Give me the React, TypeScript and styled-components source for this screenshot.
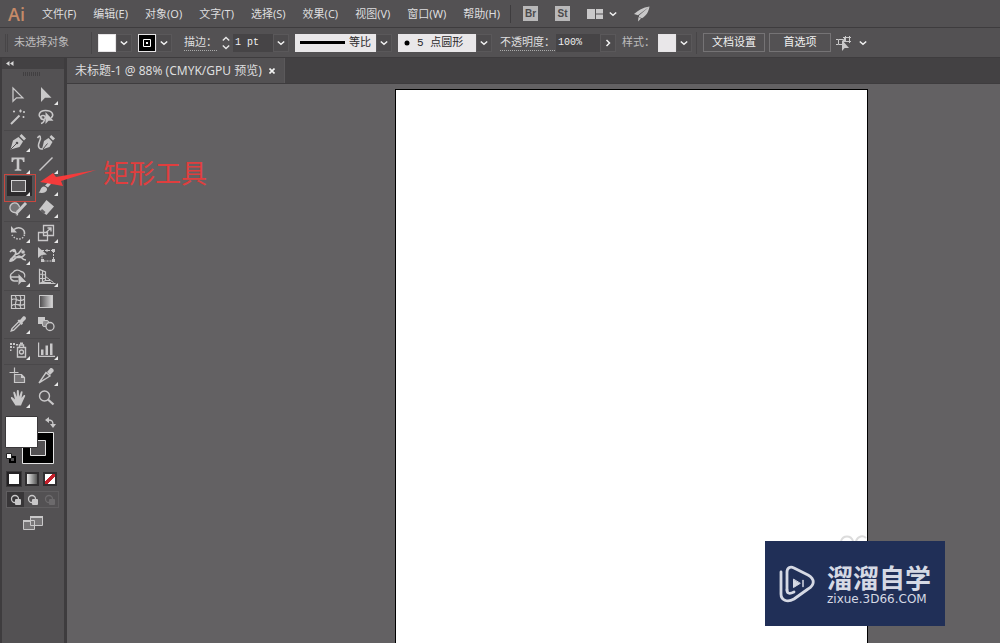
import React from "react";
import styled, { createGlobalStyle, css } from "styled-components";

const color = {
  panel: "#535153",
  panelDark: "#434143",
  line: "#3e3c3e",
  canvas: "#636163",
  text: "#dededf",
  muted: "#bdbcbd",
  icon: "#c9c8c9",
  field: "#464446",
  light: "#e9e7e9",
  red: "#e03e3e",
  brand: "#202f57",
};

const GlobalStyle = createGlobalStyle`
  *, *::before, *::after { box-sizing: border-box; }
  body { margin: 0; background: ${color.canvas}; color: ${color.text};
    font-family: "Noto Sans", "Noto Sans CJK SC", sans-serif; font-size: 12px; line-height: 16px; }
  button, input, select { font: inherit; color: inherit; border: 0; padding: 0; margin: 0; background: none; border-radius: 0; }
  svg { display: block; flex: none; }
`;

const Shell = styled.div`
  position: relative;
  display: flex;
  flex-direction: column;
  min-height: 100vh;
`;

/* ---------- top menu ---------- */

const MenuBar = styled.header`
  display: flex;
  align-items: center;
  height: 28px;
  padding-left: 8px;
  background: ${color.panel};
  border-bottom: 1px solid ${color.line};
`;

const Brand = styled.span`
  width: 34px;
  font: 600 18px/20px "Open Sans", sans-serif;
  color: #c58a68;
`;

const MenuList = styled.nav`
  display: flex;
  gap: 17px;
  font-size: 11px;
`;

const MenuButton = styled.button`
  white-space: nowrap;
`;

const MenuDivider = styled.span`
  width: 1px;
  height: 18px;
  margin: 0 12px 0 10px;
  background: ${color.line};
`;

const QuickActions = styled.div`
  display: flex;
  align-items: center;
  gap: 17px;
`;

const AppBadge = styled.button`
  width: 15px;
  height: 15px;
  background: #b9b8b9;
  color: #4b494b;
  font: bold 10px/15px "Liberation Sans", sans-serif;
  text-align: center;
`;

const IconButton = styled.button`
  display: flex;
  align-items: center;
  gap: 6px;
`;

/* ---------- control bar ---------- */

const ControlBar = styled.div`
  display: flex;
  align-items: center;
  height: 30px;
  padding-left: 5px;
  font: 11px/16px "Liberation Mono", "Noto Sans CJK SC", monospace;
  background: ${color.panel};
  border-bottom: 1px solid ${color.line};
`;

const Grip = styled.span`
  width: 3px;
  height: 18px;
  margin-right: 6px;
  border: 1px solid #474547;
  border-width: 0 1px;
`;

const Status = styled.span`
  width: 73px;
  color: ${color.muted};
`;

const ControlDivider = styled.span`
  width: 1px;
  height: 22px;
  margin: 0 6px 0 4px;
  background: #474547;
`;

const Dropdown = styled.div<{ $gap?: number }>`
  display: flex;
  height: 18px;
  margin-right: ${(p) => p.$gap ?? 6}px;
`;

const Swatch = styled.button<{ $fill: string }>`
  display: grid;
  place-items: center;
  width: 18px;
  height: 18px;
  background: ${(p) => p.$fill};
  border: 1px solid #e6e4e6;
`;

const ArrowButton = styled.button`
  display: grid;
  place-items: center;
  width: 16px;
  height: 18px;
  background: #4d4b4d;
  border: 1px solid #5a585a;
`;

const FieldLabel = styled.label<{ $width: number; $linked?: boolean }>`
  width: ${(p) => p.$width}px;
  white-space: nowrap;
  color: ${(p) => (p.$linked ? color.text : color.muted)};
  span {
    ${(p) =>
      p.$linked &&
      css`
        display: inline-block;
        height: 16px;
        border-bottom: 1px dotted #aaa;
      `}
  }
`;

const Spinner = styled.button`
  width: 14px;
  height: 18px;
  display: grid;
  place-items: center;
`;

const NumberField = styled.input<{ $width: number }>`
  width: ${(p) => p.$width}px;
  height: 18px;
  padding-left: 2px;
  background: ${color.field};
  color: #f0f0f0;
  font-size: 10px;
`;

const LightField = styled.div<{ $width: number }>`
  display: flex;
  align-items: center;
  justify-content: space-between;
  width: ${(p) => p.$width}px;
  padding: 0 5px;
  background: ${color.light};
  color: #2c2a2c;
`;

const PlainSelect = styled.select`
  appearance: none;
  cursor: pointer;
`;

const OutlineButton = styled.button`
  width: 62px;
  height: 19px;
  margin-right: 4px;
  border: 1px solid #757375;
  color: #f0f0f0;
`;

/* ---------- workspace ---------- */

const Workspace = styled.div`
  display: flex;
  flex: 1;
`;

const Toolbox = styled.aside`
  position: relative;
  flex: none;
  width: 67px;
  background: ${color.panel};
  border-left: 2px solid ${color.line};
  border-right: 3px solid ${color.line};
`;

const ToolboxHead = styled.button`
  display: flex;
  align-items: center;
  width: 100%;
  height: 11px;
  padding-left: 4px;
  background: ${color.panelDark};
`;

const ToolboxGrip = styled.div`
  width: 18px;
  height: 4px;
  margin: 3px auto 8px 21px;
  background: repeating-linear-gradient(90deg, #413f41 0 1px, ${color.panel} 1px 2px);
`;

const ToolGroup = styled.div<{ $space: number }>`
  display: grid;
  grid-template-columns: 28px 28px;
  width: 56px;
  margin-left: 2px;
  ${(p) =>
    p.$space > 0 &&
    css`
      margin-top: ${p.$space}px;
      border-top: 1px solid #4a484a;
    `}
`;

const ToolButton = styled.button<{ $flyout?: boolean; $active?: boolean }>`
  position: relative;
  display: grid;
  place-items: center;
  height: 22px;
  color: ${color.icon};
  ${(p) =>
    p.$active &&
    css`
      background: linear-gradient(#2d2b2d, #2d2b2d) 3px 1px / 25px 20px no-repeat;
    `}
  ${(p) =>
    p.$flyout &&
    css`
      &::after {
        content: "";
        position: absolute;
        right: 2px;
        bottom: 1px;
        border: 2px solid transparent;
        border-right-color: #e8e8e8;
        border-bottom-color: #e8e8e8;
      }
    `}
`;

const ColorWell = styled.div`
  position: relative;
  height: 48px;
  margin: 7px 0 0 3px;
`;

const WellPart = styled.button<{ $x: number; $y: number }>`
  position: absolute;
  left: ${(p) => p.$x}px;
  top: ${(p) => p.$y}px;
`;

const ModeRow = styled.div`
  display: flex;
  gap: 4px;
  margin: 8px 0 0 5px;
`;

const ColorMode = styled.button<{ $paint: string; $on?: boolean }>`
  width: 14px;
  height: 14px;
  border: 2px solid ${(p) => (p.$on ? "#242224" : "#302e30")};
  outline: 1px solid ${(p) => (p.$on ? "#3a383a" : "transparent")};
  background: ${(p) => p.$paint};
`;

const DrawRow = styled.div`
  display: grid;
  grid-template-columns: repeat(3, 1fr);
  width: 53px;
  height: 17px;
  margin: 5px 0 7px 4px;
  border: 1px solid #605e60;
`;

const DrawMode = styled.button<{ $on?: boolean; $faint?: boolean }>`
  display: grid;
  place-items: center;
  color: ${(p) => (p.$faint ? "#6c6a6c" : color.icon)};
  background: ${(p) => (p.$on ? "#383638" : "transparent")};
`;

const ScreenButton = styled.button`
  margin-left: 20px;
`;

const DocumentArea = styled.main`
  display: flex;
  flex: 1;
  flex-direction: column;
  min-width: 0;
`;

const TabBar = styled.div`
  display: flex;
  align-items: flex-end;
  height: 26px;
  background: ${color.panelDark};
  border-bottom: 1px solid ${color.line};
`;

const Tab = styled.div`
  display: flex;
  align-items: center;
  gap: 7px;
  height: 25px;
  padding: 0 9px 0 8px;
  background: ${color.panel};
  border-right: 1px solid #5b595b;
  white-space: nowrap;
`;

const Canvas = styled.div`
  display: grid;
  flex: 1;
  grid-template-columns: 328fr 473fr 132fr;
  padding-top: 5px;
  background: ${color.canvas};
`;

const Artboard = styled.section`
  grid-column: 2;
  background: #fff;
  border: 1px solid #000;
  border-bottom: 0;
`;

/* ---------- overlays ---------- */

const Highlight = styled.span`
  position: absolute;
  left: 2px;
  top: 116px;
  width: 32px;
  height: 28px;
  border: 1px solid #c9473f;
  pointer-events: none;
`;

const Callout = styled.div`
  position: absolute;
  left: 40px;
  top: 155px;
  display: flex;
  align-items: flex-end;
  gap: 7px;
  color: ${color.red};
  font: 400 26px/34px "Noto Sans CJK SC", sans-serif;
  pointer-events: none;
`;

const Watermark = styled.div`
  position: absolute;
  right: 55px;
  bottom: 17px;
  display: flex;
  align-items: center;
  gap: 12px;
  width: 180px;
  height: 85px;
  padding-left: 14px;
  background: ${color.brand};
  color: #d5d9e4;
`;

const WatermarkText = styled.div`
  display: flex;
  flex-direction: column;
  white-space: nowrap;
`;

const WatermarkName = styled.strong`
  font: 700 26px/30px "Noto Sans CJK SC", sans-serif;
`;

const WatermarkSite = styled.span`
  font: 12px/14px "DejaVu Sans", sans-serif;
`;

const WatermarkGhost = styled.svg`
  position: absolute;
  right: 133px;
  bottom: 102px;
`;

/* ---------- icons ---------- */

const Chevron = ({ right = false }: { right?: boolean }) => (
  <svg width="8" height="8" viewBox="0 0 8 8" fill="none" stroke="#f2f2f2" strokeWidth="1.5">
    <path d={right ? "M2.5 1 5.5 4 2.5 7" : "M.8 2.5 4 5.3 7.2 2.5"} />
  </svg>
);

const s = { fill: "none", stroke: "currentColor", strokeWidth: 1.3 };
const f = { fill: "currentColor" };

const glyphs: Record<string, React.ReactNode> = {
  select: <path {...s} d="M5 3v13.200l3.500-3.400h6.300z" />,
  direct: <path {...f} d="M5 2v15l4-4.300h6.500z" />,
  wand: (
    <g {...s}>
      <path strokeWidth="2" d="M3 17 11.500 8.500" />
      <path strokeWidth="1.200" d="M12.500 2.500v3M11 4h3M6 3.500v2M5 4.500h2M16 4v2M15 5h2M15.500 9v2M14.500 10h2" />
    </g>
  ),
  lasso: (
    <>
      <path {...s} strokeWidth="1.500" d="M6.500 11.500C1 10 2.500 3.500 9.500 3.500c7 0 9 4.500 5.500 7.500M7 8.500c-3 0-3 4 0 4s3-4 0-4M8 12c1 2-1 4-3 4.500" />
      <path {...f} d="M9.500 5v12l3-3.200h5z" />
    </>
  ),
  pen: (
    <>
      <path {...f} d="M2.500 17.500 5 8.500 10.500 5 15 9.500 11.500 15z" />
      <path {...f} d="m11.500 4 2-2 4.500 4.500-2 2z" />
      <path stroke={color.panel} strokeWidth="1" d="m3 17 5.500-5.500" />
      <circle cx="9" cy="11" r="1.300" fill={color.panel} />
    </>
  ),
  curve: (
    <>
      <path {...f} d="M6 17.500 8 9 12.500 6 16.500 10 13.500 15z" />
      <path {...f} d="m13.500 5 1.800-2L19 6.500l-2 2z" />
      <path {...s} strokeWidth="1.500" d="M1.500 6C4 2 5.500 5 3.500 9.500 1 15 3.500 18 7 16.500" />
      <path stroke={color.panel} d="m7 17 4.500-5.500" />
    </>
  ),
  type: <path {...f} d="M3.500 3.500h13V8H15c-.2-2-.8-2.700-2.500-2.700h-1.200v9.200c0 .8.500 1 2 1v1.300H6.700v-1.300c1.500 0 2-.2 2-1V5.300H7.500C5.800 5.300 5.200 6 5 8H3.500z" />,
  line: <path {...s} strokeWidth="1.500" d="M3.500 16.500 16.500 3.500" />,
  rect: <rect x="3.500" y="4.500" width="14" height="11" fill="#5b595b" stroke="#d6d5d6" />,
  brush: (
    <>
      <path {...f} d="M9 9.500 16 2.500c1.500-1 2.700.5 1.800 1.700L12 11.500z" />
      <path {...f} d="M8 10.500c2 .2 3.500 1.800 3 3.500-.8 3-5 3.500-8.500 2.500 2.500-1 1.500-5.500 5.500-6z" />
    </>
  ),
  shaper: (
    <>
      <path {...s} d="M11.500 9.500A4.800 4.800 0 1 0 7 14.500c2.500 0 3.500 2.500 1.500 2.500" fill="#777577" />
      <path {...s} strokeWidth="3" d="m9.500 14 8.500-9" />
      <path {...f} d="m7.500 16.500 1-4 2.500 2.500z" />
    </>
  ),
  eraser: (
    <>
      <path {...f} d="M10.500 2 18 8.500 10.500 17 3 11.500z" />
      <path d="m6 11 3.500 3-1.800 2L4.500 13z" fill="#646264" />
    </>
  ),
  rotate: (
    <>
      <path {...s} strokeWidth="1.600" d="M6 6.500C11 2.500 17 6 16.500 11" />
      <path {...f} d="M3 3v6.500h6z" />
      <path {...s} strokeWidth="1.500" strokeDasharray="1.500 1.500" d="M16.500 11.500C15.500 17 8 18 4 12" />
    </>
  ),
  scale: (
    <g {...s}>
      <path d="M7.500 2.500h10v10h-10zM2.500 9.500h9v8h-9zM10 9.500l4.500-4M11.500 5h3.500v3.500" />
    </g>
  ),
  width: (
    <>
      <path {...s} strokeWidth="1.700" d="M2 7c4-4 7 0 5 3s-5 4-5 6c4 1 6-5 9-5s2 4 7 4M8 9c3 1 4-3 6-5M5 12c4-1 8 3 12-3" />
      <circle cx="6" cy="5.500" r="1.800" {...f} />
      <circle cx="15" cy="7" r="1.800" {...f} />
      <circle cx="4" cy="14.500" r="1.800" {...f} />
    </>
  ),
  transform: (
    <>
      <path {...s} strokeWidth="1" strokeDasharray="2 1" d="M6 5.500h11.500v10.500H6z" />
      <path {...f} d="M2 2v11l3.500-3 5.500-.5zM16 4h3v3h-3zM16 14h3v3h-3zM5 14h3v3H5zM10 4.500h2v2h-2z" />
    </>
  ),
  builder: (
    <>
      <path {...s} d="M6 14a4.500 4.500 0 0 1-1-8.500 5 4.500 0 0 1 8-1 4.300 4.300 0 0 1 3.500 6M3 10h9M6 14h4" />
      <path {...f} d="M10.500 7v11l2.800-3h5z" />
    </>
  ),
  perspective: (
    <g {...s} strokeWidth="1.200">
      <path d="M3.500 2.500v14l6-3V5zM6.500 3.500v11.500M3.500 7l6 1M3.500 11.500h6" />
      <path strokeWidth="1" d="M3.500 16.500h16M9.500 9.500l8 6M6 15.500h9M9 13.500h5" />
    </g>
  ),
  mesh: (
    <g {...s} strokeWidth="1.200">
      <path d="M3.500 3.500h13v13h-13zM3.500 8C8 4 10 12 16.500 7M3.500 14c4-5 8 2 13-2M7 3.500c4 5-2 8 1 13M12 3.500c3 5-2 8 1 13" />
    </g>
  ),
  gradient: (
    <>
      <defs>
        <linearGradient id="toolGradient">
          <stop stopColor="#4a484a" />
          <stop offset="1" stopColor="#dad9da" />
        </linearGradient>
      </defs>
      <rect x="3.500" y="3.500" width="13" height="12" fill="url(#toolGradient)" stroke="currentColor" />
    </>
  ),
  dropper: (
    <>
      <path {...s} strokeWidth="1.400" d="m11 7.500-7 7-.8 2.500 2.500-.8 7-7" />
      <path {...f} d="m9.500 6.500 1.500-1 1 .5L15 2.500c1.500-1 4 1 2.500 3L14.500 8.500l.5 1-1.500 1.500z" />
    </>
  ),
  blend: (
    <>
      <path {...f} d="M2 3h7v7H2z" />
      <rect x="6.500" y="6.500" width="6" height="6" rx="1.500" fill="#8f8d8f" stroke="currentColor" />
      <circle cx="14" cy="12.500" r="4" fill={color.panel} stroke="currentColor" strokeWidth="1.300" />
    </>
  ),
  spray: (
    <>
      <path {...s} strokeWidth="1.400" d="M9.500 7.500h8v9.500h-8zM11.500 7V5h4v2" />
      <circle cx="13.500" cy="12" r="2" {...s} />
      <path {...f} d="M12 2.500h3v2h-3zM2 3h2v2H2zM5 3h2v2H5zM8 4h2v1.500H8zM2 6h2v2H2zM5 6.500h1.500V8H5zM2 9.500h1.500V11H2z" />
    </>
  ),
  graph: <path {...f} d="M2 2.500h1.200v13.300H19V17H2zM5 9.500h2.500v5.500H5zM9.500 5.500H12V15H9.500zM14 3.500h2.500V15H14z" />,
  artboard: (
    <>
      <path {...s} strokeWidth="1.200" d="M6.500 1.500v6M1.500 6.500h9" />
      <path d="M6.500 8.500h7l3 3v5h-10z" fill="#777577" stroke="currentColor" strokeWidth="1.200" />
      <path {...f} d="M13 8v4h4z" />
    </>
  ),
  slice: (
    <>
      <path {...s} strokeWidth="1.400" d="M3 17 10 6.500l4 3.500zM3 17l6-4" />
      <path {...f} d="m11 6 3.500-4c1.500-.5 4 1.500 3 3.500L14 9z" />
    </>
  ),
  hand: (
    <path {...f} d="M7.500 17.500 3 10.500c-.5-1.500 1.200-1.800 2-.8L7 11.500 5.300 5c-.2-1.400 1.500-1.700 1.900-.3L8.700 9 8.800 3c.1-1.400 1.900-1.400 2 0l.4 5.800L12.800 4c.5-1.300 2-.8 1.700.5L13.500 10l2-2.500c1-1 2.200-.2 1.500 1L14 15l-1 2.500z" />
  ),
  zoom: (
    <g {...s}>
      <circle cx="8.500" cy="8" r="5" strokeWidth="1.400" />
      <path strokeWidth="2.200" d="m12 11.500 5.500 5" />
    </g>
  ),
};

const Glyph = ({ name }: { name: string }) => (
  <svg width="20" height="20" viewBox="0 0 20 20" aria-hidden="true">
    {glyphs[name]}
  </svg>
);

type Tool = { id: string; label: string; flyout?: boolean };
const tool = (id: string, label: string, flyout = true): Tool => ({ id, label, flyout });

const toolGroups: { space: number; tools: Tool[] }[] = [
  {
    space: 0,
    tools: [tool("select", "选择工具", false), tool("direct", "直接选择工具"), tool("wand", "魔棒工具", false), tool("lasso", "套索工具", false)],
  },
  {
    space: 2,
    tools: [
      tool("pen", "钢笔工具"), tool("curve", "曲率工具", false),
      tool("type", "文字工具"), tool("line", "直线段工具"),
      tool("rect", "矩形工具"), tool("brush", "画笔工具"),
      tool("shaper", "Shaper 工具"), tool("eraser", "橡皮擦工具"),
    ],
  },
  {
    space: 2,
    tools: [
      tool("rotate", "旋转工具"), tool("scale", "比例缩放工具"),
      tool("width", "宽度工具"), tool("transform", "自由变换工具", false),
      tool("builder", "形状生成器工具"), tool("perspective", "透视网格工具"),
    ],
  },
  {
    space: 2,
    tools: [tool("mesh", "网格工具", false), tool("gradient", "渐变工具", false), tool("dropper", "吸管工具"), tool("blend", "混合工具", false)],
  },
  { space: 3, tools: [tool("spray", "符号喷枪工具"), tool("graph", "柱形图工具")] },
  {
    space: 3,
    tools: [tool("artboard", "画板工具", false), tool("slice", "切片工具"), tool("hand", "抓手工具"), tool("zoom", "缩放工具", false)],
  },
];

const menus = ["文件(F)", "编辑(E)", "对象(O)", "文字(T)", "选择(S)", "效果(C)", "视图(V)", "窗口(W)", "帮助(H)"];

const DrawGlyph = () => (
  <svg width="12" height="12" viewBox="0 0 12 12">
    <circle cx="5" cy="5" r="3.500" fill="none" stroke="currentColor" strokeWidth="1.300" />
    <rect x="5" y="5" width="6" height="6" rx="1" fill="currentColor" />
  </svg>
);

function TopMenu() {
  return (
    <MenuBar>
      <Brand>Ai</Brand>
      <MenuList>
        {menus.map((m) => (
          <MenuButton key={m}>{m}</MenuButton>
        ))}
      </MenuList>
      <MenuDivider />
      <QuickActions>
        <AppBadge>Br</AppBadge>
        <AppBadge>St</AppBadge>
        <IconButton aria-label="排列文档">
          <svg width="16" height="10" viewBox="0 0 16 10" fill={color.icon}>
            <path d="M0 0h8v10H0zM9 0h7v4.500H9zM9 5.500h7V10H9z" />
          </svg>
          <Chevron />
        </IconButton>
        <IconButton aria-label="GPU 性能">
          <svg width="16" height="16" viewBox="0 0 16 16" fill={color.icon}>
            <path d="M15.500.500C9 1.500 4 4.500 0 8l4 1.200zM15.500.500 5 9.500v1.500l3 1.200C12.500 9.500 14.500 6 15.500.500zM4.500 11 4 15.500 7 12.500z" />
          </svg>
        </IconButton>
      </QuickActions>
    </MenuBar>
  );
}

function Controls() {
  return (
    <ControlBar>
      <Grip />
      <Status>未选择对象</Status>
      <ControlDivider />
      <Dropdown>
        <Swatch $fill="#fff" aria-label="填色" />
        <ArrowButton aria-label="填色选项"><Chevron /></ArrowButton>
      </Dropdown>
      <Dropdown $gap={12}>
        <Swatch $fill="#000" aria-label="描边颜色">
          <svg width="8" height="8" viewBox="0 0 8 8">
            <path d="M.5.5h7v7h-7z" fill="none" stroke="#fff" />
            <path d="M3 3h2v2H3z" fill="#fff" />
          </svg>
        </Swatch>
        <ArrowButton aria-label="描边颜色选项"><Chevron /></ArrowButton>
      </Dropdown>
      <FieldLabel htmlFor="stroke" $width={35} $linked><span>描边：</span></FieldLabel>
      <Dropdown>
        <Spinner aria-label="调整描边粗细">
          <svg width="8" height="14" viewBox="0 0 8 14" fill="none" stroke="#e8e8e8" strokeWidth="1.400">
            <path d="M.8 4.500 4 1.500l3.200 3M.8 9.500 4 12.500l3.200-3" />
          </svg>
        </Spinner>
        <NumberField id="stroke" $width={40} defaultValue="1 pt" />
        <ArrowButton aria-label="描边粗细选项"><Chevron /></ArrowButton>
      </Dropdown>
      <Dropdown>
        <LightField $width={81}>
          <svg width="45" height="3" viewBox="0 0 45 3"><path d="M0 0h45v3H0z" /></svg>
          <PlainSelect aria-label="宽度配置文件"><option>等比</option></PlainSelect>
        </LightField>
        <ArrowButton aria-label="配置文件选项"><Chevron /></ArrowButton>
      </Dropdown>
      <Dropdown $gap={8}>
        <LightField $width={78}>
          <svg width="7" height="6" viewBox="0 0 7 6"><circle cx="4" cy="3" r="2.500" /></svg>
          <PlainSelect aria-label="画笔定义"><option>5 点圆形</option></PlainSelect>
          <span />
        </LightField>
        <ArrowButton aria-label="画笔选项"><Chevron /></ArrowButton>
      </Dropdown>
      <FieldLabel htmlFor="opacity" $width={56} $linked><span>不透明度：</span></FieldLabel>
      <Dropdown>
        <NumberField id="opacity" $width={44} defaultValue="100%" />
        <ArrowButton aria-label="不透明度选项"><Chevron right /></ArrowButton>
      </Dropdown>
      <FieldLabel htmlFor="style" $width={36}><span>样式：</span></FieldLabel>
      <Dropdown $gap={0}>
        <Swatch id="style" $fill={color.light} />
        <ArrowButton aria-label="样式选项"><Chevron /></ArrowButton>
      </Dropdown>
      <ControlDivider />
      <OutlineButton>文档设置</OutlineButton>
      <OutlineButton>首选项</OutlineButton>
      <IconButton aria-label="选择类似的对象">
        <svg width="18" height="16" viewBox="0 0 18 16" fill="none" stroke={color.icon}>
          <path d="M3.500 4.500h5v5h-5zM1 4.500h2M1 9.500h2M9.500 2.500h5v4h-5zM8 2.500h8M10.500 1v6M14.500 1v7M8 6.500h8" />
          <path fill={color.icon} stroke="none" d="M7 5v11l2.700-3H14z" />
        </svg>
        <Chevron />
      </IconButton>
    </ControlBar>
  );
}

function Tools() {
  return (
    <Toolbox>
      <ToolboxHead aria-label="折叠工具栏">
        <svg width="8" height="5" viewBox="0 0 8 5" fill="#d8d8d8"><path d="M3.500 0v5L0 2.500zM7.500 0v5L4 2.500z" /></svg>
      </ToolboxHead>
      <ToolboxGrip />
      {toolGroups.map((group) => (
        <ToolGroup key={group.tools[0].id} $space={group.space}>
          {group.tools.map((t) => (
            <ToolButton key={t.id} aria-label={t.label} $flyout={t.flyout} $active={t.id === "rect"}>
              <Glyph name={t.id} />
            </ToolButton>
          ))}
        </ToolGroup>
      ))}
      <Highlight />
      <ColorWell>
        <WellPart $x={17} $y={16} aria-label="描边">
          <svg width="32" height="32" viewBox="0 0 32 32">
            <path d="M.5.500h31v31H.500z" fill="#000" stroke="#e4e4e4" />
            <path d="M8.500 8.500h15v15h-15z" fill={color.panel} stroke="#e4e4e4" />
          </svg>
        </WellPart>
        <WellPart $x={0} $y={0} aria-label="填色">
          <svg width="33" height="32" viewBox="0 0 33 32"><path d="M.5.500h32v31H.500z" fill="#fff" stroke="#3a383a" /></svg>
        </WellPart>
        <WellPart $x={40} $y={1} aria-label="互换填色和描边">
          <svg width="11" height="11" viewBox="0 0 11 11" fill={color.icon}>
            <path d="M4 0v6L0 3zM11 7H5l3 4z" /><path d="M3 3c4 0 5 1 5 5" fill="none" stroke={color.icon} strokeWidth="1.300" />
          </svg>
        </WellPart>
        <WellPart $x={1} $y={37} aria-label="默认填色和描边">
          <svg width="10" height="10" viewBox="0 0 10 10">
            <path d="M4 4h5v5H4z" fill="none" stroke="#000" strokeWidth="2" /><path d="M.5.500h5v5h-5z" fill="#fff" stroke="#222" />
          </svg>
        </WellPart>
      </ColorWell>
      <ModeRow>
        <ColorMode $on $paint="#fff" aria-label="颜色" />
        <ColorMode $paint="linear-gradient(90deg, #eee, #555)" aria-label="渐变" />
        <ColorMode $paint="linear-gradient(135deg, #fff 38%, #c3202b 38% 62%, #fff 62%)" aria-label="无" />
      </ModeRow>
      <DrawRow>
        <DrawMode $on aria-label="正常绘图"><DrawGlyph /></DrawMode>
        <DrawMode aria-label="背面绘图"><DrawGlyph /></DrawMode>
        <DrawMode $faint aria-label="内部绘图"><DrawGlyph /></DrawMode>
      </DrawRow>
      <ScreenButton aria-label="更改屏幕模式">
        <svg width="22" height="16" viewBox="0 0 22 16" fill="#777577" stroke={color.icon}>
          <path d="M1.500 5.500h11v9h-11zM8.500 1.500h12v9h-12z" /><path strokeWidth="2" d="M8 2h13M1 6h7" />
        </svg>
      </ScreenButton>
    </Toolbox>
  );
}

export default function App() {
  return (
    <>
      <GlobalStyle />
      <Shell>
        <TopMenu />
        <Controls />
        <Workspace>
          <Tools />
          <DocumentArea>
            <TabBar>
              <Tab>
                未标题-1 @ 88% (CMYK/GPU 预览)
                <IconButton aria-label="关闭">
                  <svg width="6" height="6" viewBox="0 0 6 6" stroke="#f2f2f2" strokeWidth="1.600"><path d="m.5.500 5 5M5.500.500l-5 5" /></svg>
                </IconButton>
              </Tab>
            </TabBar>
            <Canvas>
              <Artboard aria-label="画板" />
            </Canvas>
          </DocumentArea>
        </Workspace>
        <Callout>
          <svg width="56" height="19" viewBox="0 0 56 19"><path fill="#f43b3b" d="M0 12 13 3l3 4L56 0 21 11l2 5z" /></svg>
          矩形工具
        </Callout>
        <WatermarkGhost width="28" height="6" viewBox="0 0 28 6" fill="none" stroke="#dcdcdc" strokeWidth="2">
          <path d="M2 6C4 0 12 0 14 6M17 6c2-5 7-6 10-3" />
        </WatermarkGhost>
        <Watermark>
          <svg width="36" height="38" viewBox="0 0 36 38" fill="none" stroke="#d5d9e4" strokeWidth="2.800" strokeLinecap="round" strokeLinejoin="round">
            <path d="M8 25V7c0-4 3-6 7-4l14 7c7 4 7 10 0 14L15 34c-7 4-13 1-13-5V7" />
            <path d="M8 25c0 4 3 4 7 2" />
            <path d="M14.500 14.500v8l6.500-4z" fill="#d5d9e4" strokeWidth="1" />
            <path d="M24 15.500v6" strokeWidth="1.500" />
          </svg>
          <WatermarkText>
            <WatermarkName>溜溜自学</WatermarkName>
            <WatermarkSite>zixue.3D66.COM</WatermarkSite>
          </WatermarkText>
        </Watermark>
      </Shell>
    </>
  );
}
